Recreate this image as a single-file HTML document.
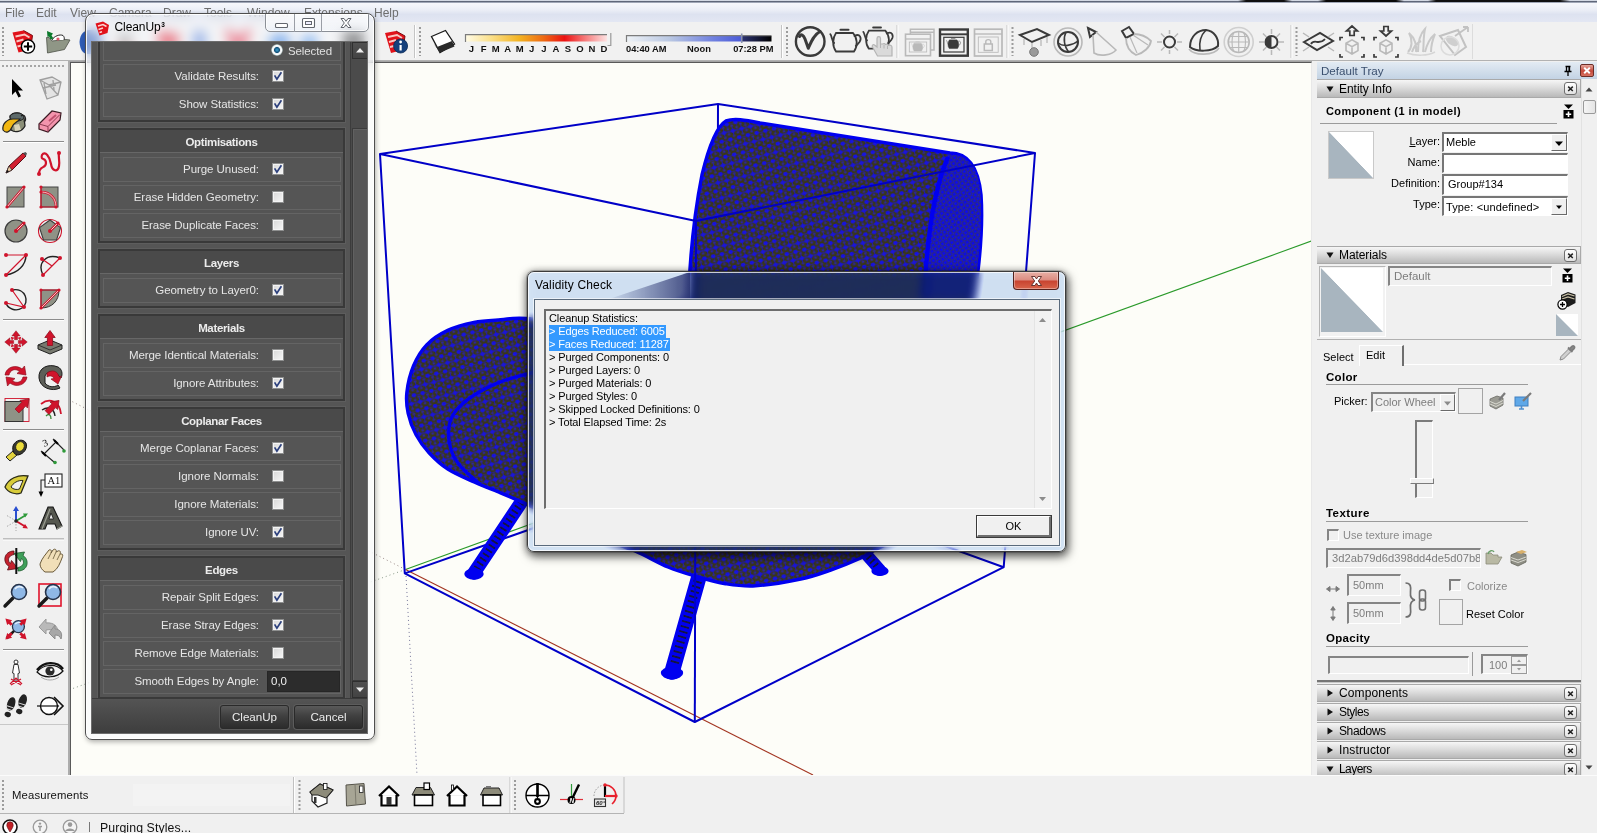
<!DOCTYPE html>
<html><head><meta charset="utf-8"><title>SketchUp CleanUp</title>
<style>
*{box-sizing:border-box}
html,body{margin:0;padding:0}
body{width:1597px;height:833px;position:relative;overflow:hidden;background:#f0f0f0;font-family:"Liberation Sans",sans-serif;font-size:11px;color:#000}
.abs{position:absolute}
#topstrip{left:0;top:0;width:1597px;height:3px;background:linear-gradient(90deg,transparent 0,transparent 1238px,#111 1246px,#111 1284px,transparent 1292px,transparent 1318px,#0a0a0a 1326px,#0a0a0a 1396px,transparent 1404px,transparent 1428px,#111 1436px,#111 1560px,transparent 1570px) 0 0/1597px 2px no-repeat,linear-gradient(#d9dee8 0,#cfd5e0 33%,#5a6172 40%,#6b7488 70%,#e4e8f2 100%)}
#menubar{left:0;top:3px;width:1597px;height:19px;background:linear-gradient(#f7f8fc 0,#eceff7 35%,#dde2f0 60%,#e3e7f3 100%);color:#6e6e6e;font-size:12px}
#menubar span{position:absolute;top:3px}
#toolbar{left:0;top:22px;width:1597px;height:39px;background:#f1f1f1;border-bottom:1px solid #b2b2b2}
#lefttools{left:0;top:61px;width:70px;height:714px;background:#f0f0f0;border-right:2px solid #acacac}
#viewport{left:70px;top:62px;width:1242px;height:713px;background:#fdfdf8;border-left:1px solid #595959;border-top:1px solid #595959;border-right:1px solid #e8e8e8;box-shadow:0 -1px 0 #a4a4a4;overflow:hidden}
#tray{left:1312px;top:62px;width:285px;height:713px;background:#f0f0f0}
#bottombar{left:0;top:775px;width:1597px;height:40px;background:#f0f0f0}
#statusbar{left:0;top:815px;width:1597px;height:18px;background:#f0f0f0}
</style></head><body>
<div id="topstrip" class="abs"></div>
<div id="menubar" class="abs"><span style="left:5px">File</span><span style="left:36px">Edit</span><span style="left:70px">View</span><span style="left:109px">Camera</span><span style="left:163px">Draw</span><span style="left:204px">Tools</span><span style="left:247px">Window</span><span style="left:304px">Extensions</span><span style="left:374px">Help</span></div>
<div id="toolbar" class="abs"><svg width="1597" height="39" viewBox="0 22 1597 39" style="position:absolute;left:0;top:0" font-family="Liberation Sans, sans-serif">
<defs><linearGradient id="mg" x1="0" x2="1"><stop offset="0" stop-color="#fffbe6"/><stop offset=".18" stop-color="#fbe08a"/><stop offset=".38" stop-color="#f3b321"/><stop offset=".55" stop-color="#ee6a12"/><stop offset=".7" stop-color="#ec1212"/><stop offset=".85" stop-color="#f67d7d"/><stop offset="1" stop-color="#fde3e3"/></linearGradient>
<linearGradient id="tg" x1="0" x2="1"><stop offset="0" stop-color="#eef2f6"/><stop offset=".3" stop-color="#b9c7e2"/><stop offset=".6" stop-color="#6f80e0"/><stop offset=".79" stop-color="#4b5bd8"/><stop offset=".8" stop-color="#2c3270"/><stop offset=".9" stop-color="#161a3a"/><stop offset="1" stop-color="#000"/></linearGradient></defs>
<line x1="3" y1="27" x2="3" y2="56" stroke="#9c9c9c" stroke-width="2" stroke-dasharray="2 2"/>
<g transform="translate(12.5 30.5) scale(1)"><path d="M0 2L11 0L20 5L18 19L6 22Z" fill="#e1121a"/><path d="M3 6L12 4L17 7M4 11L11 9M5 16L9 15" stroke="#f8c9c4" stroke-width="2" fill="none"/><path d="M11 0L20 5L18 19" stroke="#7b0c10" stroke-width="1" fill="none"/></g>
<circle cx="28" cy="46.5" r="6.6" fill="#fff" stroke="#000" stroke-width="1.4"/><path d="M28 42.3V50.7M23.8 46.5H32.2" stroke="#000" stroke-width="2"/>
<path d="M46.5 37.5H49L52 41L66 39.5L70 40L64.5 49.5L47.5 53Z" fill="#8f9686" stroke="#4d5247" stroke-width=".8"/><path d="M52 40C54 36 60 34 63 35.5C64.5 37 64.5 38.5 64 40" fill="#fff" stroke="#222" stroke-width="1"/><path d="M47 31L53 33.5L51.5 35.5L53.5 38.5L50.5 39.5L49 36.5L47.5 37Z" fill="#0c7a2c"/><circle cx="58" cy="39" r="1.6" fill="#e0566a"/>
<path d="M79.5 42C80 34 84 30 90 30H101V54H88C83 54 80 50 79.5 42Z" fill="#2f5cb6"/>
<path d="M118 32L132 52M132 32L118 52" stroke="#555" stroke-width="3"/><circle cx="119" cy="51" r="4" fill="#d22"/><circle cx="132" cy="51" r="4" fill="#d22"/>
<path d="M157 31L180 34L176 52L160 50Z" fill="#e0283a"/>
<rect x="193" y="31" width="13" height="20" fill="#5b84d8"/>
<path d="M226 31L250 53M250 31L226 53" stroke="#e0203a" stroke-width="7"/>
<path d="M268 44C270 32 286 30 291 40L287 50L272 50Z" fill="#2a78e0"/>
<path d="M300 44C302 34 314 32 318 40L316 50L304 50Z" fill="#3a86e6"/>
<rect x="343" y="31" width="21" height="20" fill="#444"/>
<g transform="translate(385 31) scale(1)"><path d="M0 2L11 0L20 5L18 19L6 22Z" fill="#e1121a"/><path d="M3 6L12 4L17 7M4 11L11 9M5 16L9 15" stroke="#f8c9c4" stroke-width="2" fill="none"/><path d="M11 0L20 5L18 19" stroke="#7b0c10" stroke-width="1" fill="none"/></g>
<circle cx="400.6" cy="46" r="7" fill="#15407c" stroke="#0b2a56" stroke-width=".8"/><path d="M400.6 45V50.5" stroke="#fff" stroke-width="2.2"/><circle cx="400.6" cy="42" r="1.4" fill="#fff"/>
<line x1="414.5" y1="25" x2="414.5" y2="58" stroke="#c4c4c4" stroke-width="1"/><line x1="415.5" y1="25" x2="415.5" y2="58" stroke="#fff" stroke-width="1"/>
<line x1="420" y1="27" x2="420" y2="56" stroke="#9c9c9c" stroke-width="2" stroke-dasharray="2 2"/>
<path d="M431.5 36.5L445.5 30.5L454.5 44L440 52.5Z" fill="#fff" stroke="#1a1a1a" stroke-width="1.3"/><path d="M434 44L440 52.5L454.5 46.5L452 41L437 47Z" fill="#2a2a2a"/>
<rect x="465.5" y="35" width="141.5" height="6.5" fill="url(#mg)"/><path d="M465.5 42V34.7H607" stroke="#7c7c7c" stroke-width="1.2" fill="none"/><path d="M610.8 33V45.5H607.5" stroke="#9a9a9a" stroke-width="1.2" fill="none"/>
<text x="471.5" y="52.3" font-size="9.5" font-weight="bold" text-anchor="middle" fill="#111">J</text>
<text x="483.55" y="52.3" font-size="9.5" font-weight="bold" text-anchor="middle" fill="#111">F</text>
<text x="495.6" y="52.3" font-size="9.5" font-weight="bold" text-anchor="middle" fill="#111">M</text>
<text x="507.65" y="52.3" font-size="9.5" font-weight="bold" text-anchor="middle" fill="#111">A</text>
<text x="519.7" y="52.3" font-size="9.5" font-weight="bold" text-anchor="middle" fill="#111">M</text>
<text x="531.75" y="52.3" font-size="9.5" font-weight="bold" text-anchor="middle" fill="#111">J</text>
<text x="543.8" y="52.3" font-size="9.5" font-weight="bold" text-anchor="middle" fill="#111">J</text>
<text x="555.85" y="52.3" font-size="9.5" font-weight="bold" text-anchor="middle" fill="#111">A</text>
<text x="567.9" y="52.3" font-size="9.5" font-weight="bold" text-anchor="middle" fill="#111">S</text>
<text x="579.95" y="52.3" font-size="9.5" font-weight="bold" text-anchor="middle" fill="#111">O</text>
<text x="592" y="52.3" font-size="9.5" font-weight="bold" text-anchor="middle" fill="#111">N</text>
<text x="604.05" y="52.3" font-size="9.5" font-weight="bold" text-anchor="middle" fill="#111">D</text>
<rect x="626.5" y="36" width="145" height="5.5" fill="url(#tg)"/><path d="M626.5 42V35.6H771.5" stroke="#7c7c7c" stroke-width="1.2" fill="none"/><path d="M741.7 33.5V43" stroke="#8a93b0" stroke-width="1.6"/>
<text x="626" y="52" font-size="9.3" font-weight="bold" fill="#111">04:40 AM</text><text x="699" y="52" font-size="9.3" font-weight="bold" text-anchor="middle" fill="#111">Noon</text><text x="773.5" y="52" font-size="9.3" font-weight="bold" text-anchor="end" fill="#111">07:28 PM</text>
<line x1="781.5" y1="25" x2="781.5" y2="58" stroke="#c4c4c4" stroke-width="1"/><line x1="782.5" y1="25" x2="782.5" y2="58" stroke="#fff" stroke-width="1"/>
<line x1="787" y1="27" x2="787" y2="56" stroke="#9c9c9c" stroke-width="2" stroke-dasharray="2 2"/>
<circle cx="810.2" cy="41.5" r="14.3" fill="none" stroke="#3a3a3a" stroke-width="2.4"/><path d="M799.5 36.5C801 33.5 803.5 35 805 39L808.3 48.3C811 42 814 34.5 820 31.5" fill="none" stroke="#3a3a3a" stroke-width="3" stroke-linecap="round" stroke-linejoin="round"/>
<g transform="translate(830 29) scale(1)" fill="none" stroke="#3a3a3a" stroke-width="1.8" stroke-linecap="round"><path d="M6 4C2.5 9 2 17 6 22.5H24C28 17 27.5 9 23 4Z"/><path d="M10.5 0.8H18.5" stroke-width="2.07"/><path d="M4.2 14C1.5 11.5 2 7 0.3 5.2M24.5 7C30 4 32 9 29.5 13C28 15 27 16 25.8 17" fill="none"/></g>
<g transform="translate(863 26.8) scale(0.97)" fill="none" stroke="#3a3a3a" stroke-width="1.8" stroke-linecap="round"><path d="M6 4C2.5 9 2 17 6 22.5H24C28 17 27.5 9 23 4Z"/><path d="M10.5 0.8H18.5" stroke-width="2.07"/><path d="M4.2 14C1.5 11.5 2 7 0.3 5.2M24.5 7C30 4 32 9 29.5 13C28 15 27 16 25.8 17" fill="none"/></g>
<path d="M872.5 47C871.5 45.5 873 44 874.5 45L877 47V38.5C877 36 880.5 36 880.5 38.5V44H882.5C884 43.2 885 43.5 885.5 44.5C887 43.8 888.2 44.2 888.6 45.3C890.5 44.8 892 45.5 892 47.5V56H877.5Z" fill="#dadada" stroke="#b4b4b4" stroke-width="1.2"/><path d="M880.5 44V48M884 45V48.5M887.5 45.5V49" stroke="#b4b4b4" stroke-width="1"/>
<line x1="897" y1="25" x2="897" y2="58" stroke="#c4c4c4" stroke-width="1"/><line x1="898" y1="25" x2="898" y2="58" stroke="#fff" stroke-width="1"/>
<path d="M910.4 34V29.2H934V50H930.5M910.4 32.2H934" stroke="#b9b9b9" fill="none" stroke-width="1.5"/>
<g stroke="#b9b9b9" fill="none"><rect x="905.5" y="34.2" width="25" height="21.5" stroke-width="1.6"/><path d="M905.5 39H930.5" stroke-width="1.28"/><rect x="909.3" y="42" width="17.4" height="10" stroke-width="0.8"/><g transform="translate(911.5 41.5) scale(0.42)" fill="#b9b9b9" stroke="#b9b9b9" stroke-width="1" stroke-linecap="round"><path d="M6 4C2.5 9 2 17 6 22.5H24C28 17 27.5 9 23 4Z"/><path d="M10.5 0.8H18.5" stroke-width="1.15"/><path d="M4.2 14C1.5 11.5 2 7 0.3 5.2M24.5 7C30 4 32 9 29.5 13C28 15 27 16 25.8 17" fill="none"/></g></g>
<g stroke="#3a3a3a" fill="none"><rect x="940" y="29.5" width="27.8" height="26.2" stroke-width="2.4"/><path d="M940 34.3H967.8" stroke-width="1.92"/><rect x="943.8" y="37.3" width="20.2" height="14.7" stroke-width="1.2"/><g transform="translate(946.5 38.2) scale(0.46)" fill="#3a3a3a" stroke="#3a3a3a" stroke-width="1" stroke-linecap="round"><path d="M6 4C2.5 9 2 17 6 22.5H24C28 17 27.5 9 23 4Z"/><path d="M10.5 0.8H18.5" stroke-width="1.15"/><path d="M4.2 14C1.5 11.5 2 7 0.3 5.2M24.5 7C30 4 32 9 29.5 13C28 15 27 16 25.8 17" fill="none"/></g></g>
<g stroke="#b9b9b9" fill="none"><rect x="974.5" y="29.2" width="27.5" height="26.8" stroke-width="1.7"/><path d="M974.5 34H1002" stroke-width="1.36"/><rect x="978.3" y="37" width="19.9" height="15.3" stroke-width="0.85"/><rect x="984.3" y="44" width="8" height="6.5" stroke="#b9b9b9" stroke-width="1.5"/><path d="M985.8 44V41.5C985.8 39 990.8 39 990.8 41.5V44" stroke="#b9b9b9" stroke-width="1.4"/></g>
<line x1="1007" y1="25" x2="1007" y2="58" stroke="#c4c4c4" stroke-width="1"/><line x1="1008" y1="25" x2="1008" y2="58" stroke="#fff" stroke-width="1"/>
<line x1="1012.5" y1="27" x2="1012.5" y2="56" stroke="#9c9c9c" stroke-width="2" stroke-dasharray="2 2"/>
<path d="M1020 35L1037 29L1049 35L1032 42Z" fill="none" stroke="#3a3a3a" stroke-width="2"/><path d="M1024 39V45M1032 43V49M1041 40V46M1047 37V43" stroke="#b9b9b9" stroke-width="1.3"/><circle cx="1034" cy="52" r="4.3" fill="#9a9a9a" stroke="#777"/>
<circle cx="1068" cy="42" r="14" fill="none" stroke="#b9b9b9" stroke-width="1.6"/><circle cx="1068" cy="42" r="10" fill="none" stroke="#3a3a3a" stroke-width="2"/><path d="M1058 43C1063 47 1072 46 1078 41M1066 32C1063 38 1064 47 1069 52" stroke="#3a3a3a" stroke-width="1.6" fill="none"/>
<path d="M1088 28L1096 32L1090 37Z" fill="none" stroke="#3a3a3a" stroke-width="2"/><path d="M1093 35L1094 53C1100 57 1112 55 1116 50L1096 32" fill="none" stroke="#b9b9b9" stroke-width="1.6"/>
<path d="M1122 31L1129 27L1134 34L1126 38Z" fill="none" stroke="#3a3a3a" stroke-width="2"/><path d="M1126 38C1126 46 1130 52 1136 55C1144 53 1150 47 1151 41C1146 36 1140 34 1134 34" fill="none" stroke="#b9b9b9" stroke-width="1.8"/><path d="M1130 37L1137 53M1133 35L1148 45" stroke="#b9b9b9" stroke-width="1.2"/>
<circle cx="1169.5" cy="42" r="5.5" fill="none" stroke="#3a3a3a" stroke-width="2"/><path d="M1169.5 30V34M1169.5 50V54M1157 42H1162M1177 42H1182M1161 33.5L1164.5 37M1178 33.5L1174.5 37M1161 50.5L1164.5 47M1178 50.5L1174.5 47" stroke="#b9b9b9" stroke-width="1.5"/>
<path d="M1190 47C1190 36 1198 30 1206 30C1214 31 1219 38 1218 46C1212 52 1196 52 1190 47Z" fill="none" stroke="#3a3a3a" stroke-width="2"/><path d="M1206 30C1201 35 1199 43 1200 50" stroke="#3a3a3a" stroke-width="1.6" fill="none"/><path d="M1189 49C1194 56 1214 56 1219 48" stroke="#b9b9b9" stroke-width="1.6" fill="none"/>
<circle cx="1238.7" cy="42" r="14.5" fill="none" stroke="#cfcfcf" stroke-width="1.6"/><circle cx="1238.7" cy="42" r="10.5" fill="none" stroke="#b9b9b9" stroke-width="1.6"/><path d="M1228.5 42H1249M1230 36.5H1247.5M1230 47.5H1247.5M1238.7 31.5V52.5M1233.5 33C1231.5 38 1231.5 46 1233.5 51M1244 33C1246 38 1246 46 1244 51" stroke="#b9b9b9" stroke-width="1.1" fill="none"/>
<circle cx="1271.5" cy="42" r="6" fill="none" stroke="#3a3a3a" stroke-width="2"/><path d="M1271.5 36A6 6 0 0 0 1271.5 48Z" fill="#3a3a3a"/><path d="M1271.5 29V34M1271.5 50V55M1259 42H1264M1279 42H1284M1263 33.5L1266.5 37M1280 33.5L1276.5 37M1263 50.5L1266.5 47M1280 50.5L1276.5 47" stroke="#b9b9b9" stroke-width="1.5"/>
<line x1="1291" y1="25" x2="1291" y2="58" stroke="#c4c4c4" stroke-width="1"/><line x1="1292" y1="25" x2="1292" y2="58" stroke="#fff" stroke-width="1"/>
<line x1="1296.5" y1="27" x2="1296.5" y2="56" stroke="#9c9c9c" stroke-width="2" stroke-dasharray="2 2"/>
<path d="M1304 42L1320 33L1333 41L1317 50Z" fill="none" stroke="#3a3a3a" stroke-width="2"/><path d="M1311 44C1314 38 1319 46 1325 39" stroke="#3a3a3a" stroke-width="1.8" fill="none"/><path d="M1303 33L1309 37M1334 33L1328 37M1303 51L1309 47M1334 51L1328 47" stroke="#b9b9b9" stroke-width="1.5"/>
<path d="M1349.8 35.5V31H1346.5L1352 26L1357.5 31H1354.2V35.5Z" fill="none" stroke="#3a3a3a" stroke-width="1.7"/><path d="M1346 43.2L1352 39.8L1358 43.2V50.6L1352 54L1346 50.6ZM1346 43.2L1352 46.6L1358 43.2M1352 46.6V54" fill="none" stroke="#b9b9b9" stroke-width="1.6"/><path d="M1340 40.5V37.5H1343M1361 37.5H1364V40.5M1340 54V57H1343M1361 57H1364V54" fill="none" stroke="#3a3a3a" stroke-width="1.7"/>
<path d="M1383.8 26.5V31H1380.5L1386 36L1391.5 31H1388.2V26.5Z" fill="none" stroke="#3a3a3a" stroke-width="1.7"/><path d="M1380 43.2L1386 39.8L1392 43.2V50.6L1386 54L1380 50.6ZM1380 43.2L1386 46.6L1392 43.2M1386 46.6V54" fill="none" stroke="#b9b9b9" stroke-width="1.6"/><path d="M1374 40.5V37.5H1377M1395 37.5H1398V40.5M1374 54V57H1377M1395 57H1398V54" fill="none" stroke="#3a3a3a" stroke-width="1.7"/>
<path d="M1408 52C1412 48 1413 40 1409 33C1415 38 1417 46 1416 52M1418 52C1418 42 1420 34 1425 29C1423 38 1424 46 1423 52M1425 52C1427 44 1430 38 1435 34C1432 41 1431 47 1431 52M1412 52C1414 46 1417 43 1421 41" fill="none" stroke="#c9c9c9" stroke-width="2"/><path d="M1407 53C1415 56 1428 56 1435 52" stroke="#d6d6d6" stroke-width="1.5" fill="none"/>
<path d="M1440 36L1458 30L1466 47L1455 55Z" fill="none" stroke="#c2c2c2" stroke-width="2"/><ellipse cx="1452" cy="41" rx="7" ry="4" transform="rotate(35 1452 41)" fill="#cfcfcf"/><path d="M1455 36L1468 27M1468 27H1463M1468 27V32" stroke="#c2c2c2" stroke-width="1.8" fill="none"/><circle cx="1450" cy="46" r="9" fill="none" stroke="#dcdcdc" stroke-width="1.5"/>
<line x1="1472.5" y1="24" x2="1472.5" y2="59" stroke="#dcdcdc"/>
</svg></div>
<div id="lefttools" class="abs"><svg width="70" height="714" viewBox="0 61 70 714" style="position:absolute;left:0;top:0" font-family="Liberation Serif, serif">
<line x1="2" y1="66" x2="66" y2="66" stroke="#a5a5a5" stroke-width="2" stroke-dasharray="2 2"/>
<line x1="3" y1="141.5" x2="64" y2="141.5" stroke="#8c8c8c" stroke-width="1"/><line x1="3" y1="142.5" x2="64" y2="142.5" stroke="#fff" stroke-width="1"/>
<line x1="3" y1="319.5" x2="64" y2="319.5" stroke="#8c8c8c" stroke-width="1"/><line x1="3" y1="320.5" x2="64" y2="320.5" stroke="#fff" stroke-width="1"/>
<line x1="3" y1="429.5" x2="64" y2="429.5" stroke="#8c8c8c" stroke-width="1"/><line x1="3" y1="430.5" x2="64" y2="430.5" stroke="#fff" stroke-width="1"/>
<line x1="3" y1="539" x2="64" y2="539" stroke="#8c8c8c" stroke-width="1"/><line x1="3" y1="540" x2="64" y2="540" stroke="#fff" stroke-width="1"/>
<line x1="3" y1="649.5" x2="64" y2="649.5" stroke="#8c8c8c" stroke-width="1"/><line x1="3" y1="650.5" x2="64" y2="650.5" stroke="#fff" stroke-width="1"/>
<line x1="0" y1="724.5" x2="68" y2="724.5" stroke="#c8c8c8"/>
<g transform="translate(16 88)"><path d="M-4 -9V7L-0.5 3.5L2.5 9.5L5 8.3L2 2.5H7Z" fill="#000"/></g>
<g transform="translate(50 88)"><path d="M-10 -8L2 -11L11 -6L8 7L-3 11Z M-10 -8L-1 -3L8 7M-1 -3L11 -6M-6 -5L-4 6M3 -8L4 2M-7 0L6 -3" fill="#e4e4e4" stroke="#9f9f9f" stroke-width="1.3"/></g>
<g transform="translate(16 122)"><path d="M-6 -6C-2 -11 6 -10 8 -4L9 4C6 10 -1 11 -5 8Z" fill="#8b8f78" stroke="#222" stroke-width="1.3"/><ellipse cx="1" cy="-5" rx="7" ry="4" fill="#5d6a6a" stroke="#222"/><path d="M-3 -3C-9 -3 -14 2 -13 8C-10 12 -6 10 -4 5C-3 1 2 0 4 -3Z" fill="#f1b712" stroke="#222" stroke-width="1.2"/><path d="M5 -6C9 -9 11 -2 8 0" fill="none" stroke="#222" stroke-width="1.3"/><path d="M-2 3L3 2L5 8L-1 9Z" fill="#d8d3b8"/></g>
<g transform="translate(50 122)"><path d="M-11 2L2 -11L11 -9L10 -2L-2 10L-11 7Z" fill="#f494ad" stroke="#3a1a22" stroke-width="1.2"/><path d="M-11 2L-2 4.5L10 -7.5M-2 4.5V10" fill="none" stroke="#8e3b52" stroke-width="1"/><path d="M-1 -1L6 -7" stroke="#c0506e" stroke-width="2"/></g>
<g transform="translate(16 163)"><path d="M-10 10L-7 3L7 -10L10 -7L-4 7Z" fill="#d22030" stroke="#5a0e16" stroke-width="1"/><path d="M-10 10L-7 3L-4 7Z" fill="#e8c9a0" stroke="#333" stroke-width=".8"/><path d="M-10 10L-8.5 6.8L-7 8.5Z" fill="#111"/><path d="M7 -10L10 -7L11 -9.5L9.5 -11Z" fill="#555"/></g>
<g transform="translate(50 163)"><path d="M-11 11C-11 2 -4 6 -4 0C-4 -6 -10 -2 -8 -8C-5 -13 0 -6 1 1C2 8 8 10 9 3C10 -3 8 -6 9 -10" fill="none" stroke="#d0142c" stroke-width="2.2"/><circle cx="-11" cy="11" r="2" fill="#d0142c"/><circle cx="9" cy="-10" r="2" fill="#d0142c"/></g>
<g transform="translate(16 197)"><rect x="-9" y="-10" width="17" height="20" fill="#8f9286" stroke="#444" stroke-width="1"/><path d="M-9 10L8 -10" stroke="#d0142c" stroke-width="2.6"/><path d="M-9 10L8 -10" stroke="#f7d9d9" stroke-width="1"/><circle cx="-9" cy="10" r="1.6" fill="#d0142c"/><circle cx="8" cy="-10" r="1.6" fill="#d0142c"/></g>
<g transform="translate(50 197)"><rect x="-9" y="-10" width="17" height="20" fill="#8f9286" stroke="#444" stroke-width="1"/><path d="M-9 -5C0 -5 6 1 6 10" fill="none" stroke="#d0142c" stroke-width="2.4"/><path d="M-9 -5C0 -5 6 1 6 10" fill="none" stroke="#f7d9d9" stroke-width=".9"/><path d="M-9 -10V10H6" stroke="#d0142c" fill="none" stroke-width="1.2"/><circle cx="-9" cy="-10" r="1.6" fill="#d0142c"/><circle cx="-9" cy="-5" r="1.6" fill="#d0142c"/><circle cx="-9" cy="10" r="1.6" fill="#d0142c"/><circle cx="6" cy="10" r="1.6" fill="#d0142c"/></g>
<g transform="translate(16 231)"><circle cx="0" cy="0" r="11" fill="#8f9286" stroke="#3c3c3c" stroke-width="1.2"/><path d="M0 0L8 -8" stroke="#d0142c" stroke-width="2.6"/><path d="M0 0L8 -8" stroke="#f7d9d9" stroke-width="1"/><circle cx="0" cy="0" r="2" fill="#d0142c"/><circle cx="8" cy="-8" r="1.6" fill="#d0142c"/></g>
<g transform="translate(50 231)"><circle cx="0" cy="0" r="11.5" fill="none" stroke="#d0142c" stroke-width="1.1"/><path d="M0 -11L10.5 -3.4L6.5 9L-6.5 9L-10.5 -3.4Z" fill="#8f9286" stroke="#3c3c3c" stroke-width="1.1"/><path d="M0 0L8 -8" stroke="#d0142c" stroke-width="2.6"/><path d="M0 0L8 -8" stroke="#f7d9d9" stroke-width="1"/><circle cx="0" cy="0" r="2" fill="#d0142c"/><circle cx="8" cy="-8" r="1.6" fill="#d0142c"/></g>
<g transform="translate(16 265)"><path d="M-10 10C2 8 10 0 10 -10" fill="none" stroke="#222" stroke-width="1.4"/><path d="M-10 -10H10L-10 10" fill="none" stroke="#d0142c" stroke-width="1.2"/><circle cx="-10" cy="-10" r="2" fill="#d0142c"/><circle cx="10" cy="-10" r="2" fill="#d0142c"/><circle cx="-10" cy="10" r="2" fill="#d0142c"/></g>
<g transform="translate(50 265)"><path d="M-7 10C-13 -2 -4 -12 10 -7" fill="none" stroke="#222" stroke-width="1.4"/><path d="M-7 10L10 -7M-8 -6L2 1" fill="none" stroke="#d0142c" stroke-width="1.2"/><circle cx="-7" cy="10" r="2" fill="#d0142c"/><circle cx="10" cy="-7" r="2" fill="#d0142c"/><circle cx="-8" cy="-6" r="2" fill="#d0142c"/></g>
<g transform="translate(16 299)"><path d="M-4 -9C10 -12 14 4 6 9C0 13 -8 10 -10 4" fill="none" stroke="#222" stroke-width="1.4"/><path d="M-4 -9L8 8L-10 4" fill="none" stroke="#d0142c" stroke-width="1.2"/><circle cx="-4" cy="-9" r="2" fill="#d0142c"/><circle cx="8" cy="8" r="2" fill="#d0142c"/><circle cx="-10" cy="4" r="2" fill="#d0142c"/></g>
<g transform="translate(50 299)"><path d="M-9 -9H9C9 2 2 9 -9 9Z" fill="#8f9286" stroke="#333" stroke-width="1"/><path d="M-9 9L9 -9" stroke="#d0142c" stroke-width="2.4"/><path d="M-9 9L9 -9" stroke="#f7d9d9" stroke-width=".9"/><path d="M-9 9V-9H9" stroke="#d0142c" fill="none" stroke-width="1.2"/><circle cx="-9" cy="-9" r="1.6" fill="#d0142c"/><circle cx="9" cy="-9" r="1.6" fill="#d0142c"/><circle cx="-9" cy="9" r="1.6" fill="#d0142c"/></g>
<g transform="translate(16 342)"><g transform="scale(.9)"><g transform="rotate(0)"><path d="M0 -12.5L4.6 -6.8H1.7V-2.6H-1.7V-6.8H-4.6Z" fill="#d0142c" stroke="#8e0f1e" stroke-width=".5"/></g><g transform="rotate(90)"><path d="M0 -12.5L4.6 -6.8H1.7V-2.6H-1.7V-6.8H-4.6Z" fill="#d0142c" stroke="#8e0f1e" stroke-width=".5"/></g><g transform="rotate(180)"><path d="M0 -12.5L4.6 -6.8H1.7V-2.6H-1.7V-6.8H-4.6Z" fill="#d0142c" stroke="#8e0f1e" stroke-width=".5"/></g><g transform="rotate(270)"><path d="M0 -12.5L4.6 -6.8H1.7V-2.6H-1.7V-6.8H-4.6Z" fill="#d0142c" stroke="#8e0f1e" stroke-width=".5"/></g><g transform="rotate(45)"><path d="M0 -8.2L2.1 -4.6H-2.1Z" fill="#d0142c"/></g><g transform="rotate(135)"><path d="M0 -8.2L2.1 -4.6H-2.1Z" fill="#d0142c"/></g><g transform="rotate(225)"><path d="M0 -8.2L2.1 -4.6H-2.1Z" fill="#d0142c"/></g><g transform="rotate(315)"><path d="M0 -8.2L2.1 -4.6H-2.1Z" fill="#d0142c"/></g></g></g>
<g transform="translate(50 342)"><path d="M-12 3L0 -2L12 3V7L0 12L-12 7Z" fill="#77796f" stroke="#222" stroke-width="1"/><path d="M-12 3L0 8L12 3" fill="none" stroke="#222" stroke-width=".8"/><path d="M0 -11.5L5.2 -4.5H2.6V3.5H-2.6V-4.5H-5.2Z" fill="#d0142c" stroke="#8e0f1e" stroke-width=".8"/></g>
<g transform="translate(16 376)"><path d="M-11 -1C-10 -9 0 -12 6 -7L8.5 -10L10 -1L1 -2.5L3.5 -4.8C-1 -8 -6 -6 -7 -1Z" fill="#d0142c" stroke="#8e0f1e" stroke-width=".7"/><path d="M11 1C10 9 0 12 -6 7L-8.5 10L-10 1L-1 2.5L-3.5 4.8C1 8 6 6 7 1Z" fill="#d0142c" stroke="#8e0f1e" stroke-width=".7"/></g>
<g transform="translate(50 376)"><path d="M-11 2C-12 -8 -2 -13 8 -9C12 -7 13 -2 11 2L8 -1C6 -5 -3 -6 -5 0V7C-2 11 4 12 8 9L10 12C2 16 -10 12 -11 2Z" fill="#5d5f58" stroke="#1a1a1a" stroke-width="1"/><path d="M-3 -3C2 -7 8 -5 9 1L11.5 0L8 8L1 3L4 2.5C3 0 0 -1 -3 1Z" fill="#d0142c" stroke="#8e0f1e" stroke-width=".7"/></g>
<g transform="translate(16 410)"><rect x="-11" y="-11.5" width="24" height="23" fill="none" stroke="#d0142c" stroke-width=".9"/><rect x="-11" y="-8.5" width="18" height="20" fill="#8f9286" stroke="#333" stroke-width="1"/><g transform="translate(1 1) rotate(45)"><path d="M0 -17L5.4 -9.6H2.7V0H-2.7V-9.6H-5.4Z" fill="#d0142c" stroke="#8e0f1e" stroke-width=".7"/></g></g>
<g transform="translate(50 410)"><path d="M-9 -6C0 -13 10 -8 11 4" fill="none" stroke="#d0142c" stroke-width="1.8"/><path d="M-8 0C-2 -4 4 -2 5 6" fill="none" stroke="#222" stroke-width="1.4"/><path d="M-4 6C-1 3 1 5 1 9" fill="none" stroke="#3b8a3b" stroke-width="1.3"/><g transform="translate(-3 2.5) rotate(45)"><path d="M0 -17L5.4 -9.6H2.7V0H-2.7V-9.6H-5.4Z" fill="#d0142c" stroke="#8e0f1e" stroke-width=".7"/></g></g>
<g transform="translate(16 450)"><path d="M-10 7L-3 1L1 5L-6 11Z" fill="#e2d23c" stroke="#222" stroke-width="1"/><path d="M-3 -4C-1 -10 7 -12 10 -7C12 -2 8 4 2 5C-2 5 -4 1 -3 -4Z" fill="#3a3a32" stroke="#111" stroke-width="1"/><ellipse cx="4" cy="-3.5" rx="4.2" ry="5" fill="#ecdc3a" stroke="#222" stroke-width=".8" transform="rotate(25 4 -3.5)"/></g>
<g transform="translate(50 450)"><path d="M-6 4L6 -8M-9 1L4 12M3 -11L14 0" fill="none" stroke="#222" stroke-width="1.1"/><path d="M-8 2L-4 6M4 -10L8 -6" stroke="#000" stroke-width="2"/><circle cx="5" cy="12.5" r="1.8" fill="#2f9a3a"/><circle cx="14" cy="1" r="1.8" fill="#2f9a3a"/><text x="-6" y="-3" font-size="10" fill="#111" transform="rotate(-20 -6 -3)">3</text></g>
<g transform="translate(16 485)"><path d="M-11 2C-8 -6 2 -11 12 -9L5 8C0 10 -8 8 -11 2Z" fill="#d8cc3a" stroke="#2a2a1a" stroke-width="1.3"/><path d="M-5 2C-3 -2 2 -5 7 -4.5L3.5 4C1 5 -3 4.5 -5 2Z" fill="#f0f0f0" stroke="#2a2a1a" stroke-width="1"/></g>
<g transform="translate(50 485)"><rect x="-5" y="-11" width="17" height="13" fill="#fff" stroke="#222" stroke-width="1.1"/><text x="-2.5" y="-1" font-size="10.5" fill="#111">A1</text><path d="M-5 -5H-9V8" fill="none" stroke="#222" stroke-width="1.1"/><path d="M-9 12L-11.5 6.5H-6.5Z" fill="#000"/></g>
<g transform="translate(16 519)"><path d="M0 2V-11" stroke="#2a4fd0" stroke-width="2"/><path d="M0 -13L3 -8H-3Z" fill="#2a4fd0"/><path d="M0 2L10 8" stroke="#d0142c" stroke-width="2"/><path d="M12 9.5L6.5 9L9 5Z" fill="#d0142c"/><path d="M0 2L10 -4" stroke="#2f9a3a" stroke-width="1.8"/><path d="M12 -5.5L7 -5.5L9 -1.5Z" fill="#2f9a3a"/><path d="M0 2L-10 -4M0 2L-10 8M0 2V12" stroke="#aaa" stroke-width="1" stroke-dasharray="1.5 1.5"/><circle cx="0" cy="2" r="1.8" fill="#222"/></g>
<g transform="translate(50 519)"><path d="M-11 10L-2 -12H3L12 7L7 10L5 5H-3L-5 10Z" fill="#55574f" stroke="#161616" stroke-width="1.1"/><path d="M-1 0L1 -6L3.5 0Z" fill="#efefef" stroke="#161616" stroke-width=".8"/><path d="M-8 10L0 -10M12 7L7 10" stroke="#9a9c92" stroke-width="1.2" fill="none"/></g>
<g transform="translate(16 561)"><path d="M-2 -10C-12 -10 -14 1 -7 5.5L-8.5 9L2 7.5L-4.5 -0.5L-5.5 2.5C-9 0 -8 -5.5 -2 -6.5Z" fill="#c4222e" stroke="#5a0e16" stroke-width=".8"/><path d="M2 10C12 10 14 -1 7 -5.5L8.5 -9L-2 -7.5L4.5 0.5L5.5 -2.5C9 0 8 5.5 2 6.5Z" fill="#3fa05a" stroke="#1d5a2c" stroke-width=".8"/><path d="M0.3 -13V13" stroke="#111" stroke-width="2"/></g>
<g transform="translate(50 561)"><path d="M-10 3C-8 -3 -4 -7 -1 -11C1 -12 2 -10 1 -8L3 -11C5 -13 7 -11 6 -9L8 -10C10 -11 11 -9 10 -7L11.5 -7C13 -7 13 -5 12 -3C10 2 8 8 3 11H-5C-8 9 -10 6 -10 3Z" fill="#f1dfb8" stroke="#6a5a3a" stroke-width="1"/><path d="M1 -8L-2 -2M6 -9L3 -2M10 -7L7 -1" stroke="#6a5a3a" stroke-width=".8" fill="none"/></g>
<g transform="translate(16 595)"><path d="M-3 3L-11 11" stroke="#1a1a1a" stroke-width="3.4" stroke-linecap="round"/><circle cx="3" cy="-3" r="7.5" fill="#8fb8e6" stroke="#26334a" stroke-width="1.6"/><path d="M-1 -6C1 -9 5 -9 7 -7" stroke="#e6f0fb" stroke-width="1.6" fill="none"/></g>
<g transform="translate(50 595)"><rect x="-11" y="-11" width="22" height="22" fill="none" stroke="#e0142c" stroke-width="1.6"/><path d="M-3 3L-11 11" stroke="#1a1a1a" stroke-width="3.4" stroke-linecap="round"/><circle cx="3" cy="-3" r="7.5" fill="#8fb8e6" stroke="#26334a" stroke-width="1.6"/><path d="M-1 -6C1 -9 5 -9 7 -7" stroke="#e6f0fb" stroke-width="1.6" fill="none"/></g>
<g transform="translate(16 629)"><g transform="scale(.8)"><path d="M-3 3L-11 11" stroke="#1a1a1a" stroke-width="3.4" stroke-linecap="round"/><circle cx="3" cy="-3" r="7.5" fill="#8fb8e6" stroke="#26334a" stroke-width="1.6"/><path d="M-1 -6C1 -9 5 -9 7 -7" stroke="#e6f0fb" stroke-width="1.6" fill="none"/></g><g transform="rotate(45)"><path d="M0 -15L3.5 -9H1.4V-6H-1.4V-9H-3.5Z" fill="#d0142c"/></g><g transform="rotate(135)"><path d="M0 -15L3.5 -9H1.4V-6H-1.4V-9H-3.5Z" fill="#d0142c"/></g><g transform="rotate(315)"><path d="M0 -15L3.5 -9H1.4V-6H-1.4V-9H-3.5Z" fill="#d0142c"/></g><g transform="rotate(225)"><path d="M0 -15L3.5 -9H1.4V-6H-1.4V-9H-3.5Z" fill="#d0142c"/></g></g>
<g transform="translate(50 629)"><path d="M-11 -2L-4 -10V-6C4 -7 9 -2 8 6C6 1 2 0 -4 1V5Z" fill="#b9b9b9" stroke="#9a9a9a" stroke-width="1"/><path d="M-1 4L5 -4V0C10 0 13 4 11 10C10 7 8 6 5 6V10Z" fill="#a8a8a8" stroke="#8d8d8d" stroke-width="1"/></g>
<g transform="translate(16 672)"><circle cx="0" cy="-10" r="2" fill="#fff" stroke="#333" stroke-width="1"/><path d="M-2 -7.5H2L3.5 1L2 1.5V8H-2V1.5L-3.5 1Z" fill="#fff" stroke="#333" stroke-width="1"/><path d="M-6 12L0 6L6 12M-5 7L5 13M5 7L-5 13" stroke="#d0142c" stroke-width="1.2" fill="none"/></g>
<g transform="translate(50 672)"><path d="M-13 0C-7 -8 6 -9 13 -1C7 6 -6 7 -13 0Z" fill="#f4f4f4" stroke="#111" stroke-width="1.2"/><path d="M-13 -2C-6 -11 7 -11 13 -3" fill="none" stroke="#111" stroke-width="2.4"/><circle cx="0" cy="-1" r="4.6" fill="#2a2a2a"/><circle cx="1.3" cy="-2.3" r="1.3" fill="#fff"/><path d="M-9 5C-4 9 4 9 9 5" stroke="#aaa" fill="none" stroke-width="1"/></g>
<g transform="translate(16 706)"><g transform="rotate(18 -5 0)"><ellipse cx="-5.5" cy="-2" rx="4" ry="7" fill="#222"/><ellipse cx="-5.5" cy="9" rx="3.2" ry="2.6" fill="#222"/><path d="M-9 1H-2M-9 4H-2" stroke="#ddd" stroke-width="1"/></g><g transform="rotate(18 6 -3)"><ellipse cx="6" cy="-5" rx="4" ry="7" fill="#222"/><ellipse cx="6" cy="6" rx="3.2" ry="2.6" fill="#222"/><path d="M2.5 -2H9.5M2.5 1H9.5" stroke="#ddd" stroke-width="1"/></g></g>
<g transform="translate(50 706)"><circle cx="-1" cy="0" r="8.5" fill="#fff" stroke="#111" stroke-width="1.4"/><path d="M-13 0H9" stroke="#111" stroke-width="1.2"/><path d="M4 -9L13 0L4 9" fill="none" stroke="#111" stroke-width="1.6"/></g>
</svg></div>
<div id="viewport" class="abs"><svg width="1242" height="713" viewBox="70 62 1242 713" style="position:absolute;left:-1px;top:-1px">
<defs><pattern id="mesh" width="18" height="15.6" patternUnits="userSpaceOnUse" patternTransform="rotate(-14)"><rect width="18" height="15.6" fill="#39361f"/><ellipse cx="0.00" cy="0.00" rx="2.4" ry="1.9" fill="#1510e8" opacity="1"/><ellipse cx="0.00" cy="15.60" rx="2.4" ry="1.9" fill="#1510e8" opacity="1"/><ellipse cx="18.00" cy="0.00" rx="2.4" ry="1.9" fill="#1510e8" opacity="1"/><ellipse cx="18.00" cy="15.60" rx="2.4" ry="1.9" fill="#1510e8" opacity="1"/><path d="M0 -4.2V4.2M-4.6 0H4.6" stroke="#150fe0" stroke-width=".8"/><ellipse cx="9.00" cy="0.00" rx="2.4" ry="1.9" fill="#1510e8" opacity="1"/><ellipse cx="9.00" cy="15.60" rx="2.4" ry="1.9" fill="#1510e8" opacity="1"/><path d="M9 -4.2V4.2M4.4 0H13.6" stroke="#150fe0" stroke-width=".8"/><ellipse cx="4.50" cy="7.80" rx="2.4" ry="1.9" fill="#1510e8" opacity="1"/><path d="M4.5 3.6V12M-0.1 7.8H9.1" stroke="#150fe0" stroke-width=".8"/><ellipse cx="13.50" cy="7.80" rx="2.4" ry="1.9" fill="#1510e8" opacity="1"/><path d="M13.5 3.6V12M8.9 7.8H18.1" stroke="#150fe0" stroke-width=".8"/><ellipse cx="4.50" cy="2.60" rx="1.4" ry="1.1" fill="#2a22b8" opacity="0.85"/><ellipse cx="4.50" cy="18.20" rx="1.4" ry="1.1" fill="#2a22b8" opacity="0.85"/><ellipse cx="13.50" cy="2.60" rx="1.4" ry="1.1" fill="#2a22b8" opacity="0.85"/><ellipse cx="13.50" cy="18.20" rx="1.4" ry="1.1" fill="#2a22b8" opacity="0.85"/><ellipse cx="0.00" cy="5.20" rx="1.4" ry="1.1" fill="#2a22b8" opacity="0.85"/><ellipse cx="18.00" cy="5.20" rx="1.4" ry="1.1" fill="#2a22b8" opacity="0.85"/><ellipse cx="9.00" cy="5.20" rx="1.4" ry="1.1" fill="#2a22b8" opacity="0.85"/><ellipse cx="4.50" cy="-2.60" rx="1.4" ry="1.1" fill="#2a22b8" opacity="0.85"/><ellipse cx="4.50" cy="13.00" rx="1.4" ry="1.1" fill="#2a22b8" opacity="0.85"/><ellipse cx="13.50" cy="-2.60" rx="1.4" ry="1.1" fill="#2a22b8" opacity="0.85"/><ellipse cx="13.50" cy="13.00" rx="1.4" ry="1.1" fill="#2a22b8" opacity="0.85"/><ellipse cx="0.00" cy="10.40" rx="1.4" ry="1.1" fill="#2a22b8" opacity="0.85"/><ellipse cx="18.00" cy="10.40" rx="1.4" ry="1.1" fill="#2a22b8" opacity="0.85"/><ellipse cx="9.00" cy="10.40" rx="1.4" ry="1.1" fill="#2a22b8" opacity="0.85"/><path d="M0 0H18" stroke="#2a22b0" stroke-width=".8" opacity=".5"/><path d="M0 7.8H18" stroke="#2a22b0" stroke-width=".8" opacity=".5"/></pattern><pattern id="mesh2" width="6" height="6" patternUnits="userSpaceOnUse" patternTransform="rotate(10)"><rect width="6" height="6" fill="#2e2c78"/><circle cx="1.5" cy="1.5" r="1.5" fill="#0a08f4"/><circle cx="4.5" cy="4.5" r="1.5" fill="#0a08f4"/><circle cx="4.5" cy="1.5" r=".9" fill="#1712dc"/><circle cx="1.5" cy="4.5" r=".9" fill="#1712dc"/></pattern><filter id="sb" x="-2%" y="-2%" width="104%" height="104%"><feGaussianBlur stdDeviation=".55"/></filter></defs>
<!-- axes -->
<line x1="405.5" y1="569.5" x2="1311.5" y2="241" stroke="#2a9a2a" stroke-width="1.1"/>
<line x1="405.5" y1="569.5" x2="813" y2="775" stroke="#a23420" stroke-width="1.1"/>
<line x1="405.5" y1="569.5" x2="70" y2="400.5" stroke="#9a8a88" stroke-width="1" stroke-dasharray="1 3"/>
<line x1="405.5" y1="569.5" x2="70" y2="689.5" stroke="#8a9a8a" stroke-width="1" stroke-dasharray="1 3"/>
<line x1="405.8" y1="572" x2="417" y2="775" stroke="#77779a" stroke-width="1" stroke-dasharray="1 3"/>
<g stroke="#0000c8" stroke-width="2" fill="none"><path d="M404.8 573.4L717 463.5L1003.7 567.2M718 104L717 463.5"/></g>
<g filter="url(#sb)">
<line x1="858" y1="545" x2="880" y2="570" stroke="#0500f0" stroke-width="12" stroke-linecap="round"/><line x1="858" y1="545" x2="878.68" y2="568.5" stroke="#14143c" stroke-width="6.6" stroke-dasharray="1.8 3.4"/><ellipse cx="880" cy="571" rx="8.64" ry="5.04" fill="#0500f0"/>
<line x1="524" y1="498" x2="474" y2="573" stroke="#0500f0" stroke-width="13.5" stroke-linecap="round"/><line x1="524" y1="498" x2="477" y2="568.5" stroke="#14143c" stroke-width="7.425" stroke-dasharray="1.8 3.4"/><ellipse cx="474" cy="574" rx="9.72" ry="5.67" fill="#0500f0"/>
<line x1="702" y1="566" x2="672" y2="672" stroke="#0500f0" stroke-width="15.5" stroke-linecap="round"/><line x1="702" y1="566" x2="673.8" y2="665.64" stroke="#14143c" stroke-width="8.525" stroke-dasharray="1.8 3.4"/><ellipse cx="672" cy="673" rx="11.16" ry="6.51" fill="#0500f0"/>
<path d="M527.0 318.5C510.4 317.5 509.4 319.2 500.6 319.8C491.8 320.4 482.8 320.6 474.0 322.4C465.2 324.2 455.7 326.6 447.8 330.4C439.9 334.1 432.4 339.0 426.7 344.9C421.0 350.8 416.8 358.1 413.5 366.0C410.2 373.9 407.8 384.5 406.9 392.4C406.0 400.3 406.7 406.4 408.2 413.5C409.7 420.6 412.6 428.1 416.1 434.7C419.6 441.3 424.0 447.3 429.3 453.0C434.6 458.7 440.3 464.2 447.8 469.0C455.3 473.8 465.4 478.0 474.2 482.0C483.0 486.0 493.1 489.7 500.6 492.8C508.1 495.9 513.3 498.2 519.0 500.7C524.7 503.2 526.5 504.1 535.0 508.0C543.5 511.9 559.2 519.0 570.0 524.0C580.8 529.0 589.2 533.5 600.0 538.0C610.8 542.5 623.7 546.2 635.0 551.0C646.3 555.8 658.0 562.8 668.0 567.0C678.0 571.2 685.4 573.2 695.0 576.0C704.6 578.8 715.4 582.1 725.5 583.7C735.6 585.3 743.1 586.6 755.6 585.8C768.1 585.0 788.2 581.6 800.7 579.0C813.2 576.4 820.7 573.5 830.7 570.0C840.7 566.5 853.8 561.2 860.8 558.0C867.8 554.8 862.3 557.3 873.0 551.0C883.7 544.7 910.8 535.2 925.0 520.0C939.2 504.8 951.8 480.0 958.0 460.0C964.2 440.0 970.8 426.7 962.0 400.0C953.2 373.3 948.7 316.7 905.0 300.0C861.3 283.3 750.8 295.7 700.0 300.0C649.2 304.3 628.8 322.9 600.0 326.0C571.2 329.1 543.6 319.5 527.0 318.5Z" fill="url(#mesh)" stroke="#0500f0" stroke-width="3.5"/>
<path d="M700.0 352.0C683.3 353.0 628.8 354.3 600.0 358.0C571.2 361.7 543.6 370.0 527.0 374.0C510.4 378.0 509.4 378.4 500.6 381.9C491.8 385.4 481.7 390.1 474.2 395.0C466.7 399.9 459.9 405.7 455.7 411.0C451.5 416.3 449.9 420.6 449.0 426.7C448.1 432.8 448.9 441.7 450.5 447.9C452.1 454.1 454.9 458.8 458.4 463.7C461.9 468.6 468.0 473.6 471.6 477.0C475.2 480.4 478.6 482.8 480.0 484.0" fill="none" stroke="#0500f0" stroke-width="3.5"/>
<path d="M726 121C734 118 745 120 760 123L950 153C968 153 978 166 981 195C983 225 981 255 974 300L905 420L690 420C685 330 687 250 702 175C708 150 716 127 726 121Z" fill="url(#mesh)" stroke="#0500f0" stroke-width="3.5"/>
<path d="M948 155C972 153 981 175 981 205C981 240 978 265 973 300L924 300C926 240 934 188 948 155Z" fill="url(#mesh2)"/>
<path d="M948 157C935 186 927 232 924 300" fill="none" stroke="#0500f0" stroke-width="4.5"/>
</g>
<g stroke="#0000c8" stroke-width="2" fill="none" stroke-linejoin="round">
<path d="M380 154L718 104L1035 153L696 221Z"/>
<path d="M380 154L404.8 573.4L694.8 722L1003.7 567.2L1035 153"/>
<path d="M696 221L694.8 722"/></g>
</svg></div>
<div id="tray" class="abs"><style>
#tray .t{white-space:nowrap;line-height:14px;height:14px;font-size:11px}
#tray .hd{background:linear-gradient(#f6f6f6 0,#dcdcdc 45%,#b9b9b9 100%);border:1px solid #a9a9a9;border-left:none}
#tray .hd .t{font-size:12px}
#tray .xb{position:absolute;right:3px;top:2px;width:13px;height:13px;border:1px solid #6e6e6e;border-radius:3px;background:linear-gradient(#fff,#e2e2e2)}
#tray .sunk{border:1px solid #fff;border-top:2px solid #767676;border-left:2px solid #767676;background:#fff}
#tray .sunkg{border:1px solid #fff;border-top:2px solid #858585;border-left:2px solid #858585;background:#f0f0f0;color:#7d7d7d}
#tray .ddb{position:absolute;right:0;top:0;width:16px;height:100%;background:#f0f0f0;border:1px solid #fff;border-right:1px solid #6a6a6a;border-bottom:1px solid #6a6a6a}
#tray .sw{background:linear-gradient(to top right,#a8b5bf 49.5%,#fff 50.5%);border:1px solid #d4d4d4}
#tray .ln{height:1px;background:#9b9b9b}
</style>
<div class="abs " style="left:5px;top:0px;width:280px;height:17px;background:linear-gradient(#e3ebf3,#c3d3e4)"></div>
<div class="abs t" style="left:9px;top:2px;font-size:11.6px;color:#3a4f6e">Default Tray</div>
<svg class="abs" style="left:251px;top:3px" width="10" height="12"><path d="M2.5 1.5H7.5M3.5 1.5V6.5M6.5 1.5V6.5M1.5 6.5H8.5M5 6.5V11" stroke="#000" stroke-width="1.3" fill="none"/><path d="M5.5 2H7V6H5.5Z" fill="#000"/></svg>
<div class="abs " style="left:268px;top:2px;width:14px;height:13px;background:linear-gradient(#e6a79c,#c4493c 55%,#d67060);border:1px solid #6b2d27;border-radius:2px"><svg width="12" height="11" style="position:absolute;left:0;top:0"><path d="M3.2 2.8L8.8 8.2M8.8 2.8L3.2 8.2" stroke="#fff" stroke-width="2"/></svg></div>
<div class="abs " style="left:269px;top:17px;width:16px;height:696px;background:#f0f0f0;border-left:1px solid #e2e2e2"></div>
<svg class="abs" style="left:269px;top:17px" width="16" height="696"><path d="M4.5 12.5L8 8.5L11.5 12.5Z" fill="#444"/><path d="M4.5 686.5L8 690.5L11.5 686.5Z" fill="#444"/></svg>
<div class="abs " style="left:271px;top:38px;width:13px;height:14px;background:linear-gradient(90deg,#f5f5f5,#e4e4e4);border:1px solid #9a9a9a;border-radius:2px"></div>
<div class="abs hd" style="left:5px;top:17px;width:264px;height:19px"><svg width="10" height="10" style="position:absolute;left:8px;top:3.5px"><path d="M1.5 2.5H8.5L5 8Z" fill="#111"/></svg><div class="abs t" style="left:22px;top:1.5px;letter-spacing:-0.04px">Entity Info</div><div class="xb"><svg width="11" height="11" style="position:absolute;left:0;top:0"><path d="M3.2 3.6L7.8 8M7.8 3.6L3.2 8" stroke="#222" stroke-width="1.5"/></svg></div></div>
<div class="abs t" style="left:14px;top:42px;font-weight:bold;letter-spacing:.42px">Component (1 in model)</div>
<svg class="abs" style="left:251px;top:42px" width="11" height="15"><path d="M1 0.5H10L5.5 5Z" fill="#000"/><rect x="0.5" y="6" width="10" height="8.5" fill="#000"/><path d="M5.5 7.5V13M2.8 10.2H8.2" stroke="#fff" stroke-width="1.6"/></svg>
<div class="abs ln" style="left:8px;top:61px;width:237px;height:1px;"></div>
<div class="abs sw" style="left:16px;top:69px;width:46px;height:48px;border-color:#c9c9c9"></div>
<div class="abs t" style="right:157px;top:72px;"><u>L</u>ayer:</div>
<div class="abs t" style="right:157px;top:93px;">Name:</div>
<div class="abs t" style="right:157px;top:114px;">Definition:</div>
<div class="abs t" style="right:157px;top:135px;">Type:</div>
<div class="abs sunk" style="left:130px;top:70px;width:126px;height:20px;"><div class="abs t" style="left:2px;top:1px">Meble</div><div class="ddb"><svg width="14" height="16" style="position:absolute;left:0;top:0"><path d="M3 6.5H11L7 11Z" fill="#000"/></svg></div></div>
<div class="abs sunk" style="left:130px;top:91px;width:126px;height:20px;"></div>
<div class="abs sunk" style="left:130px;top:112px;width:126px;height:21px;"><div class="abs t" style="left:4px;top:1px">Group#134</div></div>
<div class="abs sunk" style="left:130px;top:134px;width:126px;height:20px;"><div class="abs t" style="left:2px;top:2px;letter-spacing:.12px">Type: &lt;undefined&gt;</div><div class="ddb"><svg width="14" height="16" style="position:absolute;left:0;top:0"><path d="M4 6.5H10L7 10Z" fill="#000"/></svg></div></div>
<div class="abs hd" style="left:5px;top:184px;width:264px;height:18px"><svg width="10" height="10" style="position:absolute;left:8px;top:3px"><path d="M1.5 2.5H8.5L5 8Z" fill="#111"/></svg><div class="abs t" style="left:22px;top:1px;letter-spacing:-0.08px">Materials</div><div class="xb"><svg width="11" height="11" style="position:absolute;left:0;top:0"><path d="M3.2 3.6L7.8 8M7.8 3.6L3.2 8" stroke="#222" stroke-width="1.5"/></svg></div></div>
<div class="abs " style="left:7px;top:204px;width:67px;height:71px;border:1px solid #fff;border-top-color:#b5b5b5;border-left-color:#b5b5b5;background:linear-gradient(to top right,#a8b5bf 49.6%,#fff 50.4%) no-repeat 1px 1px/62px 64px,#f2f2f2"></div>
<div class="abs sunkg" style="left:76px;top:204px;width:164px;height:20px;"><div class="abs t" style="left:4px;top:1px;font-size:11.5px">Default</div></div>
<svg class="abs" style="left:250px;top:206px" width="11" height="15"><path d="M1 0.5H10L5.5 5Z" fill="#000"/><rect x="0.5" y="6" width="10" height="8.5" fill="#000"/><path d="M5.5 7.5V13M2.8 10.2H8.2" stroke="#fff" stroke-width="1.6"/></svg>
<svg class="abs" style="left:245px;top:229px" width="20" height="20"><path d="M4 4L11 1L18.5 3.5V12L11 16L4 13Z" fill="#1c1c1c"/><path d="M5 5.5L11 3L17.5 5M5 8L11 6L17.5 8" stroke="#c9c0a5" stroke-width="1.2" fill="none"/><circle cx="5.5" cy="13.5" r="4.6" fill="#fff" stroke="#000" stroke-width="1.2"/><path d="M5.5 11V16M3 13.5H8" stroke="#000" stroke-width="1.3"/></svg>
<div class="abs sw" style="left:244px;top:252px;width:22px;height:22px;border:none"></div>
<div class="abs " style="left:5px;top:277px;width:264px;height:1px;background:#b0b0b0"></div>
<div class="abs t" style="left:11px;top:288px;">Select</div>
<div class="abs " style="left:47px;top:283px;width:45px;height:21px;border-right:2px solid #6e6e6e;border-top:1px solid #fff;border-left:1px solid #fff;background:#f0f0f0"></div>
<div class="abs t" style="left:54px;top:286px;">Edit</div>
<div class="abs " style="left:92px;top:302px;width:177px;height:1px;background:#fff"></div>
<svg class="abs" style="left:246px;top:282px" width="18" height="18"><path d="M2 16L3 12.5L10.5 5L13 7.5L5.5 15Z" fill="#cfcfcf" stroke="#8a8a8a"/><path d="M10 3.5L14.5 8M11.5 5L14 2.5C15.5 1 17.5 3 16 4.5L13.5 7" stroke="#7d7d7d" stroke-width="1.8" fill="#8d8d8d"/></svg>
<div class="abs t" style="left:14px;top:308px;font-weight:bold;font-size:11.5px;letter-spacing:.3px">Color</div>
<div class="abs ln" style="left:14px;top:322px;width:202px;height:1px;"></div>
<div class="abs t" style="left:22px;top:332px;">Picker:</div>
<div class="abs sunkg" style="left:59px;top:330px;width:85px;height:20px;"><div class="abs t" style="left:2px;top:1px;font-size:11px">Color Wheel</div><div class="ddb" style="width:15px"><svg width="13" height="16" style="position:absolute;left:0;top:0"><path d="M3 6.5H10L6.5 10.5Z" fill="#8a8a8a"/></svg></div></div>
<div class="abs " style="left:146px;top:326px;width:25px;height:26px;border:1px solid #a4a4a4;background:#f0f0f0"></div>
<svg class="abs" style="left:176px;top:329px" width="20" height="20"><path d="M2 8L9 5L15 7V14L8 18L2 15Z" fill="#9b9b93" stroke="#6b6b64" stroke-width=".8"/><path d="M2 10.5L8 13L15 9.5M2 13L8 15.5L15 12" stroke="#d9d9d0" stroke-width="1" fill="none"/><path d="M11 9L17 2" stroke="#7a7a7a" stroke-width="2.2"/></svg>
<svg class="abs" style="left:202px;top:329px" width="21" height="20"><rect x="1" y="6" width="13" height="9" fill="#5fa8e8" stroke="#3f7fbf"/><path d="M5 18H10M7.5 15V18" stroke="#4d8fd0" stroke-width="1.6"/><path d="M9 10L17 2" stroke="#7a7a7a" stroke-width="2.2"/></svg>
<div class="abs " style="left:103px;top:358px;width:18px;height:78px;border:1px solid #fff;border-top:2px solid #7b7b7b;border-left:2px solid #7b7b7b;background:#f0f0f0"></div>
<div class="abs " style="left:98px;top:416px;width:24px;height:6px;border:1px solid #fff;border-right:1px solid #7b7b7b;border-bottom:1px solid #7b7b7b;background:#f0f0f0"></div>
<div class="abs t" style="left:14px;top:444px;font-weight:bold;font-size:11.5px;letter-spacing:.45px">Texture</div>
<div class="abs ln" style="left:14px;top:459px;width:202px;height:1px;"></div>
<div class="abs " style="left:15px;top:467px;width:12px;height:12px;border:1px solid #fff;border-top:2px solid #858585;border-left:2px solid #858585;background:#f0f0f0"></div>
<div class="abs t" style="left:31px;top:466px;color:#8a8a8a">Use texture image</div>
<div class="abs sunkg" style="left:14px;top:486px;width:155px;height:20px;overflow:hidden;"><div class="abs t" style="left:4px;top:1px;font-size:11.2px">3d2ab79d6d398dd4de5d07b8:</div></div>
<svg class="abs" style="left:172px;top:486px" width="20" height="20"><path d="M2 16V5H7L9 7H14V9H18L14 16Z" fill="#b9b9a4" stroke="#8a8a7a" stroke-width=".8"/><path d="M4 6C5 2 9 2 10 4" stroke="#6aa06a" fill="none" stroke-width="1.4"/></svg>
<svg class="abs" style="left:197px;top:486px" width="20" height="20"><path d="M2 7L9 4L17 6.5V14L9 18L2 15Z" fill="#8e8e84" stroke="#65655c" stroke-width=".8"/><path d="M2 9.5L9 12L17 9M2 12L9 14.5L17 11.5" stroke="#d9d9d0" stroke-width="1" fill="none"/><path d="M7 4L13 2L18 4L12 6Z" fill="#d9b06a"/></svg>
<svg class="abs" style="left:14px;top:521px" width="14" height="40"><path d="M0.5 6L4 3.5V8.5ZM13.5 6L10 3.5V8.5ZM4 6H10" fill="#7a7a7a" stroke="#7a7a7a" stroke-width="1"/><path d="M7 23.5L4.8 27H9.2ZM7 37.5L4.8 34H9.2ZM7 27V34" fill="#7a7a7a" stroke="#7a7a7a" stroke-width="1"/></svg>
<div class="abs sunkg" style="left:35px;top:512px;width:54px;height:22px;"><div class="abs t" style="left:4px;top:2px">50mm</div></div>
<div class="abs sunkg" style="left:35px;top:540px;width:54px;height:22px;"><div class="abs t" style="left:4px;top:2px">50mm</div></div>
<svg class="abs" style="left:92px;top:519px" width="26" height="40"><path d="M1.5 2C7 2 7 6 6.5 11C6 16 8 18.5 11 19C8 19.5 6 22 6.5 27C7 32 7 36 1.5 36" stroke="#6f6f6f" stroke-width="1.7" fill="none"/><rect x="15.5" y="9" width="6" height="11" rx="2.5" fill="none" stroke="#6f6f6f" stroke-width="1.6"/><rect x="15.5" y="18" width="6" height="11" rx="2.5" fill="none" stroke="#6f6f6f" stroke-width="1.6"/></svg>
<div class="abs " style="left:137px;top:517px;width:12px;height:12px;border:1px solid #fff;border-top:2px solid #7f7f7f;border-left:2px solid #7f7f7f;background:#f0f0f0"></div>
<div class="abs t" style="left:155px;top:517px;color:#8a8a8a">Colorize</div>
<div class="abs " style="left:127px;top:537px;width:24px;height:26px;border:1px solid #a4a4a4;background:#f0f0f0"></div>
<div class="abs t" style="left:154px;top:545px;">Reset Color</div>
<div class="abs t" style="left:14px;top:569px;font-weight:bold;font-size:11.5px;letter-spacing:.3px">Opacity</div>
<div class="abs ln" style="left:14px;top:584px;width:202px;height:1px;"></div>
<div class="abs " style="left:16px;top:594px;width:141px;height:18px;border:1px solid #fff;border-top:2px solid #858585;border-left:2px solid #858585;background:#f0f0f0"></div>
<div class="abs " style="left:160px;top:590px;width:1px;height:24px;background:#9a9a9a"></div>
<div class="abs sunkg" style="left:169px;top:592px;width:47px;height:20px;"><div class="abs t" style="left:6px;top:2px">100</div><svg width="16" height="18" style="position:absolute;right:0;top:0"><rect x="0.5" y="0.5" width="15" height="8" fill="#f0f0f0" stroke="#9a9a9a"/><rect x="0.5" y="9.5" width="15" height="8" fill="#f0f0f0" stroke="#9a9a9a"/><path d="M6 6L8 3.5L10 6ZM6 12L8 14.5L10 12Z" fill="#9a9a9a"/></svg></div>
<div class="abs " style="left:5px;top:618px;width:264px;height:3px;background:#757575;border-bottom:1px solid #c8c8c8"></div>
<div class="abs hd" style="left:5px;top:622px;width:264px;height:18px"><svg width="10" height="10" style="position:absolute;left:8px;top:3px"><path d="M2.5 1.5V8.5L8 5Z" fill="#111"/></svg><div class="abs t" style="left:22px;top:1px;letter-spacing:0.1px">Components</div><div class="xb"><svg width="11" height="11" style="position:absolute;left:0;top:0"><path d="M3.2 3.6L7.8 8M7.8 3.6L3.2 8" stroke="#222" stroke-width="1.5"/></svg></div></div>
<div class="abs hd" style="left:5px;top:641px;width:264px;height:18px"><svg width="10" height="10" style="position:absolute;left:8px;top:3px"><path d="M2.5 1.5V8.5L8 5Z" fill="#111"/></svg><div class="abs t" style="left:22px;top:1px;letter-spacing:-0.5px">Styles</div><div class="xb"><svg width="11" height="11" style="position:absolute;left:0;top:0"><path d="M3.2 3.6L7.8 8M7.8 3.6L3.2 8" stroke="#222" stroke-width="1.5"/></svg></div></div>
<div class="abs hd" style="left:5px;top:660px;width:264px;height:18px"><svg width="10" height="10" style="position:absolute;left:8px;top:3px"><path d="M2.5 1.5V8.5L8 5Z" fill="#111"/></svg><div class="abs t" style="left:22px;top:1px;letter-spacing:-0.4px">Shadows</div><div class="xb"><svg width="11" height="11" style="position:absolute;left:0;top:0"><path d="M3.2 3.6L7.8 8M7.8 3.6L3.2 8" stroke="#222" stroke-width="1.5"/></svg></div></div>
<div class="abs hd" style="left:5px;top:679px;width:264px;height:18px"><svg width="10" height="10" style="position:absolute;left:8px;top:3px"><path d="M2.5 1.5V8.5L8 5Z" fill="#111"/></svg><div class="abs t" style="left:22px;top:1px;letter-spacing:0.15px">Instructor</div><div class="xb"><svg width="11" height="11" style="position:absolute;left:0;top:0"><path d="M3.2 3.6L7.8 8M7.8 3.6L3.2 8" stroke="#222" stroke-width="1.5"/></svg></div></div>
<div class="abs hd" style="left:5px;top:698px;width:264px;height:18px"><svg width="10" height="10" style="position:absolute;left:8px;top:3px"><path d="M1.5 2.5H8.5L5 8Z" fill="#111"/></svg><div class="abs t" style="left:22px;top:1px;letter-spacing:-0.55px">Layers</div><div class="xb"><svg width="11" height="11" style="position:absolute;left:0;top:0"><path d="M3.2 3.6L7.8 8M7.8 3.6L3.2 8" stroke="#222" stroke-width="1.5"/></svg></div></div></div>
<div id="bottombar" class="abs"><div class="abs" style="left:0;top:0;width:1597px;height:1px;background:#fbfbfb"></div>
<div class="abs" style="left:0;top:38px;width:624px;height:1px;background:#b4b4b4"></div>
<div class="abs" style="left:12px;top:12.5px;font-size:11.3px;line-height:14px;letter-spacing:.15px;color:#111">Measurements</div>
<div class="abs" style="left:133px;top:9px;width:157px;height:22px;background:#f3f3f3"></div>
<svg width="640" height="40" viewBox="0 775 640 40" style="position:absolute;left:0;top:0" font-family="Liberation Sans, sans-serif">
<g stroke="#9c9c9c" stroke-width="2" stroke-dasharray="2 2"><line x1="3" y1="780" x2="3" y2="812"/><line x1="299.5" y1="780" x2="299.5" y2="812"/><line x1="515" y1="780" x2="515" y2="812"/></g>
<g stroke="#c0c0c0"><line x1="293.5" y1="777" x2="293.5" y2="813"/><line x1="510" y1="777" x2="510" y2="813"/><line x1="624" y1="777" x2="624" y2="813"/></g>
<g stroke="#fff"><line x1="294.5" y1="777" x2="294.5" y2="813"/><line x1="511" y1="777" x2="511" y2="813"/></g>
<!-- iso -->
<path d="M310 792L320 784L333 790L327 797V803L318 807L312 801V794Z" fill="#fff" stroke="#222" stroke-width="1.2"/><path d="M310 792L320 784L333 790L326 798L318 795L312 795Z" fill="#8d8b7a" stroke="#222" stroke-width="1"/><rect x="323.5" y="783.5" width="3.5" height="6" fill="#fff" stroke="#222" stroke-width=".9"/><rect x="314" y="797" width="2.5" height="6" fill="#333"/>
<!-- top -->
<path d="M346 785L364 783.5L365.5 804L346.5 806Z" fill="#a7a595" stroke="#55534a" stroke-width="1"/><path d="M355 784.5L356 805" stroke="#7d7b6e" stroke-width="1"/><rect x="359.5" y="786" width="3.5" height="6.5" fill="#fff" stroke="#333" stroke-width=".9"/>
<!-- front -->
<path d="M379 796L389 786.5L399 796M381.5 795V805.5H396.5V795" fill="#fff" stroke="#000" stroke-width="2.2"/><rect x="386.5" y="797" width="5" height="8" fill="#333"/>
<!-- right -->
<path d="M412 795L416 787.5H430.5L434.5 795Z" fill="#8d8b7a" stroke="#222" stroke-width="1"/><rect x="414.5" y="795" width="18" height="10.5" fill="#fff" stroke="#000" stroke-width="1.6"/><rect x="424" y="783" width="5.5" height="6.5" fill="#fff" stroke="#000" stroke-width="1.2"/>
<!-- back -->
<path d="M447 796L457 786.5L467 796M449.5 795V805.5H464.5V795" fill="#fff" stroke="#000" stroke-width="2.2"/><rect x="451.5" y="785" width="2" height="5" fill="#fff" stroke="#000" stroke-width=".8"/>
<!-- left -->
<path d="M480.5 795L484 788H499L502.5 795Z" fill="#8d8b7a" stroke="#222" stroke-width="1"/><rect x="483" y="795" width="17.5" height="10.5" fill="#fff" stroke="#000" stroke-width="1.6"/><rect x="486" y="786" width="5" height="2" fill="#777"/>
<!-- compass -->
<circle cx="537.5" cy="795.5" r="11.5" fill="#fff" stroke="#000" stroke-width="1.4"/><path d="M526 795.5H549M537.5 784V801" stroke="#000" stroke-width="1.3"/><path d="M537.5 783V797" stroke="#000" stroke-width="2.6"/><circle cx="537.5" cy="801.5" r="3.4" fill="#000"/><circle cx="537.5" cy="801.5" r="1.3" fill="#fff"/>
<!-- N arrow -->
<path d="M560 799.5H583" stroke="#e0303a" stroke-width="1.2"/><path d="M571.5 799V784" stroke="#2f9a3a" stroke-width="1.2"/><path d="M572 799L579 784.5" stroke="#000" stroke-width="2.4"/><circle cx="571.5" cy="800" r="4" fill="#000"/><text x="569.4" y="802.6" font-size="6.5" font-weight="bold" fill="#fff" font-style="italic">N</text>
<!-- clock -->
<path d="M594 796A11 11 0 0 1 605 785" fill="none" stroke="#999" stroke-width="1" stroke-dasharray="1.5 1.5"/><path d="M605 785A11 11 0 0 1 616 796A11 11 0 0 1 612 804" fill="none" stroke="#e8202c" stroke-width="1.6"/><path d="M605 785V796H615" fill="none" stroke="#000" stroke-width="2.2"/><path d="M605 796H615" stroke="#e8202c" stroke-width="2.2"/><circle cx="605" cy="785" r="1.7" fill="#e8202c"/><circle cx="616" cy="796" r="1.7" fill="#e8202c"/><rect x="594.5" y="799" width="11" height="7.5" fill="#e8e8e8" stroke="#333" stroke-width="1.1"/><text x="596" y="805.3" font-size="6" font-weight="bold" fill="#222" font-style="italic">60°</text>
</svg>
</div>
<div id="statusbar" class="abs"><svg width="100" height="18" viewBox="0 815 100 18" style="position:absolute;left:0;top:0">
<circle cx="10" cy="827" r="7" fill="#fff" stroke="#111" stroke-width="1.6"/><path d="M10 832C7.5 828 6.8 826.5 6.8 825A3.2 3.2 0 0 1 13.2 825C13.2 826.5 12.5 828 10 832Z" fill="#c22026" stroke="#5a0e12" stroke-width=".6"/>
<circle cx="40" cy="827" r="6.8" fill="#f4f4f4" stroke="#9a9a9a" stroke-width="1.3"/><circle cx="40" cy="823.6" r="1.2" fill="#9a9a9a"/><path d="M40 826V831M38 826.5H42" stroke="#9a9a9a" stroke-width="1.5"/>
<circle cx="70" cy="827" r="6.8" fill="#f4f4f4" stroke="#9a9a9a" stroke-width="1.3"/><circle cx="70" cy="824.6" r="2.3" fill="#9a9a9a"/><path d="M65.2 831C66 827.5 74 827.5 74.8 831Z" fill="#9a9a9a"/>
<line x1="89.5" y1="822" x2="89.5" y2="832" stroke="#777"/>
</svg>
<div class="abs" style="left:100px;top:6.2px;font-size:12.3px;line-height:14px;color:#111;white-space:nowrap;letter-spacing:.1px">Purging Styles...</div>
</div>
<style>
#cu{left:85px;top:13px;width:290px;height:727px;border:1px solid #4e4e4e;border-radius:8px 8px 7px 7px;background:rgba(246,249,253,.45);-webkit-backdrop-filter:blur(6px);backdrop-filter:blur(6px);box-shadow:1px 2px 5px rgba(0,0,0,.3),inset 0 0 0 1px rgba(255,255,255,.9);overflow:hidden}
#cu .glass{left:0;top:0;width:288px;height:29px;overflow:hidden}
#cu .ttl{left:28.5px;top:6px;font-size:12px;color:#000;letter-spacing:-.08px}
#cuc{left:92px;top:42px;width:275px;height:691px;background:#555;overflow:hidden;color:#e6e6e6;font-size:11.5px;box-shadow:0 0 0 1px #6d6d6d}
#cuc .g{position:absolute;left:6px;width:247px;border:2px solid #393939;background:#545454;box-shadow:0 0 0 1px #5d5d5d}
#cuc .gt{position:absolute;left:0;top:0;width:243px;height:23px;background:#4a4a4a;border-bottom:1px solid #676767;text-align:center;font-weight:bold;line-height:25px;font-size:11.5px;letter-spacing:-.35px;color:#ececec}
#cuc .r{position:absolute;left:11px;width:238px;height:25px;border:1px solid #646464;background:#555}
#cuc .r span{position:absolute;right:81px;top:0;line-height:23px;white-space:nowrap;letter-spacing:-.06px}
#cuc .cb{position:absolute;left:168px;top:5px;width:12px;height:12px;background:linear-gradient(135deg,#d8d8d8,#f6f6f6);border:1px solid #8e8f8f;box-shadow:inset 0 0 0 1px #f4f4f4}
#cuc .cb svg{position:absolute;left:0;top:0}
#cuc .sb{left:258px;top:0;width:18px;height:656px;background:#4b4b4b;border-left:1px solid #3c3c3c}
#cuc .sbb{left:1px;width:16px;height:17px;background:linear-gradient(#505050,#434343);border:1px solid #2f2f2f}
#cuc .ft{left:0;top:656px;width:276px;height:36px;background:linear-gradient(#545454,#3d3d3d);border-top:1px solid #3a3a3a}
#cuc .btn{position:absolute;top:6px;height:24px;border:1px solid #2a2a2a;border-radius:3px;background:linear-gradient(#5a5a5a,#404040 45%,#2c2c2c);color:#ececec;font-size:11.6px;text-align:center;line-height:21px;box-shadow:0 0 0 1px #5c5c5c}
</style>
<div id="cu" class="abs">
<div class="glass abs"><!--CUGLASS--></div>
<div class="ttl abs">CleanUp<sup style="font-size:6.5px;position:relative;top:1px;left:.5px;vertical-align:top;font-weight:bold">3</sup></div>
<svg class="abs" style="left:8.5px;top:7px" width="15" height="15"><path d="M0.5 2.5L8 0.5L14 4L12.5 12L4.5 14.5Z" fill="#e1121a"/><path d="M3 5L8 3.5L11.5 5.5M3.5 8.5L8 7M4.5 11.5L7 10.8" stroke="#fbd4d0" stroke-width="1.5" fill="none"/></svg>
<div class="abs" style="left:179px;top:-1px;width:104px;height:19px;border:1px solid #8b8f96;border-radius:0 0 5px 5px;background:linear-gradient(rgba(255,255,255,.75),rgba(240,244,250,.45));box-shadow:inset 0 0 0 1px rgba(255,255,255,.7)"><svg width="102" height="18" style="position:absolute;left:0;top:0"><path d="M28.5 0V18M55.5 0V18" stroke="#9a9ea6"/><rect x="9.5" y="9.5" width="12" height="4" rx="1" fill="#fff" stroke="#62666e" stroke-width="1.1"/><rect x="36.5" y="4.5" width="12" height="9" rx="1" fill="#fff" stroke="#62666e" stroke-width="1.1"/><rect x="39.5" y="7.5" width="6" height="3" fill="#eef" stroke="#62666e" stroke-width="1"/><path d="M75 4.5H78L80 7.3L82 4.5H85L81.7 9L85 13.5H82L80 10.7L78 13.5H75L78.3 9Z" fill="#fff" stroke="#62666e" stroke-width="1"/></svg></div>
</div>
<div id="cuc" class="abs">
<div class="g" style="top:-22px;height:102px">
</div>
<div class="r" style="top:-6px"><div style="position:absolute;left:167px;top:6.5px;width:12px;height:12px;border-radius:50%;background:radial-gradient(circle at 50% 50%,#3a9fd0 0,#15527a 2.6px,#e9eef2 3.4px,#fff 4.6px,#9aa 5.6px,#777 6px)"></div><span style="right:auto;left:184px;top:3px;color:#e0e0e0;letter-spacing:-.1px">Selected</span></div>
<div class="r" style="top:22px"><span>Validate Results:</span><div class="cb"><svg width="10" height="10" viewBox="0 0 10 10"><path d="M1.6 4.4L3.9 8.2L8.4 1.2" fill="none" stroke="#2b3f7c" stroke-width="1.7"/></svg></div></div>
<div class="r" style="top:50px"><span>Show Statistics:</span><div class="cb"><svg width="10" height="10" viewBox="0 0 10 10"><path d="M1.6 4.4L3.9 8.2L8.4 1.2" fill="none" stroke="#2b3f7c" stroke-width="1.7"/></svg></div></div>
<div class="g" style="top:86px;height:115px">
<div class="gt">Optimisations</div>
</div>
<div class="r" style="top:115px"><span>Purge Unused:</span><div class="cb"><svg width="10" height="10" viewBox="0 0 10 10"><path d="M1.6 4.4L3.9 8.2L8.4 1.2" fill="none" stroke="#2b3f7c" stroke-width="1.7"/></svg></div></div>
<div class="r" style="top:143px"><span>Erase Hidden Geometry:</span><div class="cb"></div></div>
<div class="r" style="top:171px"><span>Erase Duplicate Faces:</span><div class="cb"></div></div>
<div class="g" style="top:207px;height:59px">
<div class="gt">Layers</div>
</div>
<div class="r" style="top:236px"><span>Geometry to Layer0:</span><div class="cb"><svg width="10" height="10" viewBox="0 0 10 10"><path d="M1.6 4.4L3.9 8.2L8.4 1.2" fill="none" stroke="#2b3f7c" stroke-width="1.7"/></svg></div></div>
<div class="g" style="top:272px;height:87px">
<div class="gt">Materials</div>
</div>
<div class="r" style="top:301px"><span>Merge Identical Materials:</span><div class="cb"></div></div>
<div class="r" style="top:329px"><span>Ignore Attributes:</span><div class="cb"><svg width="10" height="10" viewBox="0 0 10 10"><path d="M1.6 4.4L3.9 8.2L8.4 1.2" fill="none" stroke="#2b3f7c" stroke-width="1.7"/></svg></div></div>
<div class="g" style="top:365px;height:143px">
<div class="gt">Coplanar Faces</div>
</div>
<div class="r" style="top:394px"><span>Merge Coplanar Faces:</span><div class="cb"><svg width="10" height="10" viewBox="0 0 10 10"><path d="M1.6 4.4L3.9 8.2L8.4 1.2" fill="none" stroke="#2b3f7c" stroke-width="1.7"/></svg></div></div>
<div class="r" style="top:422px"><span>Ignore Normals:</span><div class="cb"></div></div>
<div class="r" style="top:450px"><span>Ignore Materials:</span><div class="cb"></div></div>
<div class="r" style="top:478px"><span>Ignore UV:</span><div class="cb"><svg width="10" height="10" viewBox="0 0 10 10"><path d="M1.6 4.4L3.9 8.2L8.4 1.2" fill="none" stroke="#2b3f7c" stroke-width="1.7"/></svg></div></div>
<div class="g" style="top:514px;height:143px">
<div class="gt">Edges</div>
</div>
<div class="r" style="top:543px"><span>Repair Split Edges:</span><div class="cb"><svg width="10" height="10" viewBox="0 0 10 10"><path d="M1.6 4.4L3.9 8.2L8.4 1.2" fill="none" stroke="#2b3f7c" stroke-width="1.7"/></svg></div></div>
<div class="r" style="top:571px"><span>Erase Stray Edges:</span><div class="cb"><svg width="10" height="10" viewBox="0 0 10 10"><path d="M1.6 4.4L3.9 8.2L8.4 1.2" fill="none" stroke="#2b3f7c" stroke-width="1.7"/></svg></div></div>
<div class="r" style="top:599px"><span>Remove Edge Materials:</span><div class="cb"></div></div>
<div class="r" style="top:627px"><span>Smooth Edges by Angle:</span><div style="position:absolute;left:163px;top:1px;width:73px;height:21px;background:#2c2c2c;border:1px solid #262626;color:#f0f0f0;line-height:19px;padding-left:3px">0,0</div></div>
<div class="sb abs"><div class="sbb abs" style="top:0"><svg width="14" height="15" style="position:absolute;left:0;top:0"><path d="M3 9.5L7 5L11 9.5Z" fill="#eee"/></svg></div>
<div class="abs" style="left:1px;top:86px;width:16px;height:553px;background:#565656;border:1px solid #3b3b3b;box-shadow:inset 1px 1px 0 #616161"></div>
<div class="sbb abs" style="top:639px"><svg width="14" height="15" style="position:absolute;left:0;top:0"><path d="M3 5.5L7 10L11 5.5Z" fill="#eee"/></svg></div></div>
<div class="ft abs"><div class="btn" style="left:128px;width:69px">CleanUp</div><div class="btn" style="left:202px;width:69px">Cancel</div></div>
</div>
<style>
#vd{left:527px;top:271px;width:539px;height:281px;border:1px solid #3c3c3c;border-radius:7px;background:rgba(70,150,240,.20);-webkit-backdrop-filter:blur(5px) saturate(.45) contrast(1.3) brightness(.95);backdrop-filter:blur(5px) saturate(.45) contrast(1.3) brightness(.95);box-shadow:0 0 0 1px rgba(0,0,0,.18),2px 4px 10px 1px rgba(0,0,0,.55),-1px 1px 8px rgba(0,0,0,.35);overflow:hidden}
#vd .in{left:0;top:0;width:537px;height:279px;border:1px solid rgba(255,255,255,.75);border-radius:6px}
#vd .ttl{left:7px;top:6px;font-size:12px;color:#000;letter-spacing:.15px}
#vd .cl{left:485px;top:0;width:46px;height:18px;border:1px solid #55221d;border-top:none;border-radius:0 0 4px 4px;background:linear-gradient(#e8b0a6 0,#dc8c80 48%,#c8432f 52%,#d8644a 100%);box-shadow:inset 0 0 0 1px rgba(255,255,255,.35)}
#vc{left:534px;top:299px;width:526px;height:247px;background:#f0f0f0;border:1px solid #5a6a7c;box-shadow:0 0 0 1px rgba(255,255,255,.6)}
#vt{left:9px;top:9px;width:508px;height:200px;border:1px solid #fff;border-top:2px solid #6d6d6d;border-left:2px solid #6d6d6d;background:#f0f0f0;font-size:11px;line-height:13px;letter-spacing:-.12px;white-space:nowrap}
#vt div{position:absolute;left:3px;height:13px}
#vt .s{background:#3399ff;color:#fff;padding-right:1px}
#vok{left:442px;top:216px;width:74px;height:21px;border:1px solid #fff;border-right:2px solid #6e6e6e;border-bottom:2px solid #6e6e6e;box-shadow:0 0 0 1px #3a3a3a;background:#f0f0f0;text-align:center;line-height:18px;font-size:11px}
</style>
<div id="vd" class="abs"><svg class="abs" style="left:0;top:0" width="537" height="28"><defs><linearGradient id="stk" x1="0" x2="1"><stop offset="0" stop-color="#2a3470" stop-opacity="0"/><stop offset="1" stop-color="#2a3470" stop-opacity=".85"/></linearGradient></defs><path d="M78 28L162 0V28Z" fill="url(#stk)"/></svg><div class="in abs"></div>
<div class="ttl abs">Validity Check</div>
<div class="cl abs"><svg width="44" height="17" style="position:absolute;left:0;top:0"><path d="M17.5 4.5H21L22.5 7L24 4.5H27.5L24.3 9L27.5 13.5H24L22.5 11L21 13.5H17.5L20.7 9Z" fill="#fff" stroke="#5a2a26" stroke-width=".9"/></svg></div>
</div>
<div id="vc" class="abs">
<div id="vt" class="abs">
<div style="top:1px">Cleanup Statistics:</div>
<div class="s" style="top:14px">&gt; Edges Reduced: 6005</div>
<div class="s" style="top:27px">&gt; Faces Reduced: 11287</div>
<div style="top:40px">&gt; Purged Components: 0</div>
<div style="top:53px">&gt; Purged Layers: 0</div>
<div style="top:66px">&gt; Purged Materials: 0</div>
<div style="top:79px">&gt; Purged Styles: 0</div>
<div style="top:92px">&gt; Skipped Locked Definitions: 0</div>
<div style="top:105px">&gt; Total Elapsed Time: 2s</div>
<div style="left:488px;top:0;width:17px;height:197px;background:#f2f2f2;border-left:1px solid #e4e4e4"></div>
<svg width="17" height="197" style="position:absolute;left:488px;top:0"><path d="M5 11L8.5 7L12 11Z" fill="#8c8c8c"/><path d="M5 186L8.5 190L12 186Z" fill="#8c8c8c"/></svg>
</div>
<div id="vok" class="abs">OK</div>
</div>

</body></html>
